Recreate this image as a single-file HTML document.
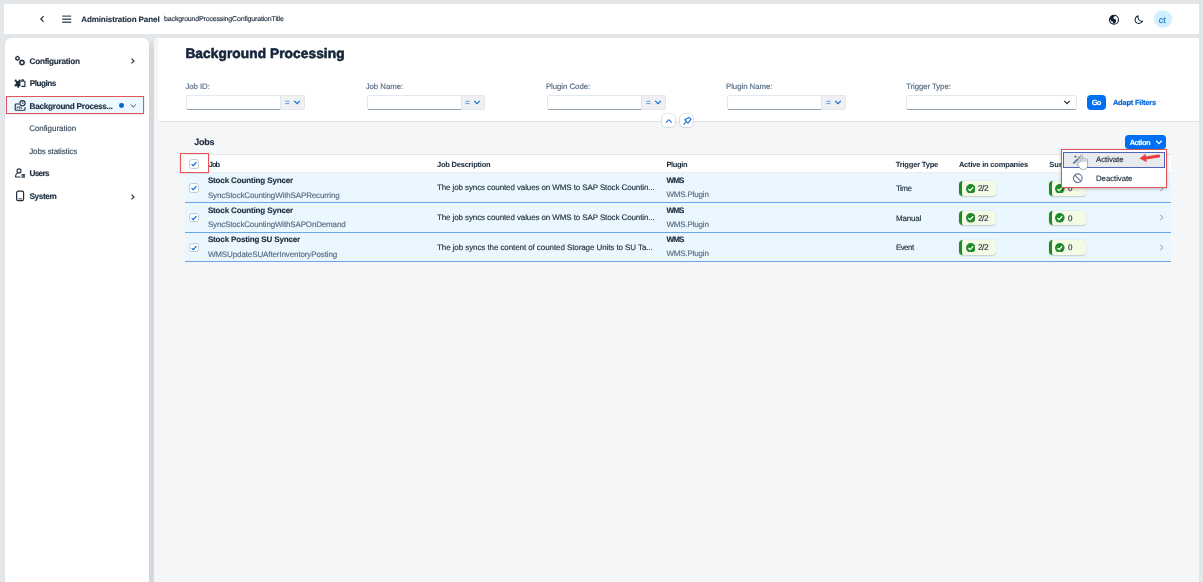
<!DOCTYPE html>
<html><head><meta charset="utf-8">
<style>
*{box-sizing:border-box;margin:0;padding:0}
html,body{width:1203px;height:582px;overflow:hidden}
body{background:#e4e7ea;font-family:"Liberation Sans",sans-serif;color:#1d2d3e;position:relative}
.a{position:absolute}
.t{position:absolute;white-space:nowrap;line-height:12px;font-size:8px;-webkit-text-stroke:0.15px currentColor;text-rendering:geometricPrecision}
.tl{position:absolute;left:0;top:0;width:1203px;height:582px;will-change:transform}
.hdr{left:4px;top:4px;width:1195px;height:30px;background:#fff}
.side{left:4.5px;top:38px;width:144px;height:560px;background:#fff;border-radius:6px;box-shadow:0 0 1px rgba(0,0,0,.12)}
.main{left:154px;top:38px;width:1045px;height:560px;background:#f5f6f7;border-radius:3px}
.fbar{left:158px;top:38px;width:1041px;height:83px;background:#fff;border-radius:0 3px 0 0;box-shadow:0 1px 0 #e1e4e7}
.inp{height:15px;background:#fff;border:1px solid #e6e9ec;border-bottom:1px solid #93a3b4;border-radius:2px 0 0 2px}
.vh{height:15px;background:#eef0f2;border:1px solid #e3e6e9;border-left:1px solid #e1e5e9;border-radius:0 2px 2px 0}
.row{left:185px;width:986px;height:29.6px;background:#ebf7fe;border-bottom:1px solid #6aa5ea}
.cb{position:absolute;width:9.6px;height:9.6px;border:1px solid #c3ccd5;border-radius:2.5px;background:#fff}
.badge{position:absolute;width:37px;height:14.6px;background:#f5fae5;border-left:3.5px solid #1f8a2a;border-radius:4px;box-shadow:0 0.5px 1.5px rgba(0,0,0,.18)}
.ok{position:absolute;width:9.6px;height:9.6px}
</style></head>
<body>
<!-- header -->
<div class="a hdr"></div>
<svg class="a" style="left:38px;top:14px" width="8" height="10" viewBox="0 0 8 10"><path d="M5.6 2.2 L2.8 5 L5.6 7.8" fill="none" stroke="#1d2d3e" stroke-width="1.15"/></svg>
<svg class="a" style="left:61px;top:14px" width="12" height="10" viewBox="0 0 12 10"><path d="M1.2 2.1h9M1.2 5.2h9M1.2 8.2h9" stroke="#4b5a6b" stroke-width="1.4"/></svg>
<div class="a" style="left:1153.5px;top:10px;width:18px;height:18px;border-radius:50%;background:#d1efff"></div>
<svg class="a" style="left:1108px;top:13.5px" width="12" height="12" viewBox="0 0 12 12">
<circle cx="6" cy="5.7" r="4.5" fill="none" stroke="#0e1e2e" stroke-width="1.1"/>
<path d="M2.4 3 C3.4 1.6 5.2 1.2 6.6 1.5 L6.3 3 L5 3.8 L6.4 5.2 L7.6 5 L8.2 7 L7.2 9 L5.6 10 L4.8 7.8 L3.2 7 L2 5 Z" fill="#0e1e2e"/>
</svg>
<svg class="a" style="left:1134px;top:14.5px" width="10" height="10" viewBox="0 0 10 10">
<path d="M4 0.8 C1.6 1.6 0.4 4.4 1.4 6.6 C2.6 9 6.6 9.2 8.6 6.2 C5.6 6.6 3.4 4.4 4 0.8 Z" fill="none" stroke="#0e1e2e" stroke-width="1.05" stroke-linejoin="round"/>
</svg>

<!-- sidebar -->
<div class="a" style="left:148px;top:38px;width:6px;height:560px;background:linear-gradient(#e4e7ea,#d4d8dd 14px);filter:blur(0.6px)"></div>
<div class="a side"></div>
<div class="a" style="left:6.4px;top:95.6px;width:137.2px;height:18.2px;background:#ebf8ff;border:1.8px solid #e8535a;box-shadow:0 0.6px 1.5px rgba(0,0,0,.22)"></div>
<svg class="a" style="left:14px;top:55px" width="12" height="12" viewBox="0 0 12 12">
<path d="M3.50 0.60 L4.60 1.39 L5.84 1.95 L5.70 3.30 L5.84 4.65 L4.60 5.21 L3.50 6.00 L2.40 5.21 L1.16 4.65 L1.30 3.30 L1.16 1.95 L2.40 1.39 Z M3.5 2.3 a1 1 0 1 0 0.01 0 Z" fill="#1d2d3e" fill-rule="evenodd"/>
<path d="M8.00 4.20 L9.03 5.01 L10.33 5.17 L10.49 6.47 L11.30 7.50 L10.49 8.53 L10.33 9.83 L9.03 9.99 L8.00 10.80 L6.97 9.99 L5.67 9.83 L5.51 8.53 L4.70 7.50 L5.51 6.47 L5.67 5.17 L6.97 5.01 Z M8 6.2 a1.3 1.3 0 1 0 0.01 0 Z" fill="#1d2d3e" fill-rule="evenodd"/>
</svg>
<svg class="a" style="left:14px;top:78px" width="12" height="11" viewBox="0 0 12 11">
<g fill="#1d2d3e"><rect x="1.8" y="3" width="4.6" height="5.2"/><circle cx="1.7" cy="2.7" r="1.1"/><circle cx="5.6" cy="2.5" r="1.1"/><circle cx="1.4" cy="7.3" r="1.1"/><circle cx="4.2" cy="8.8" r="1.1"/></g>
<path d="M6.4 3.3 H8 V2.1 Q8.6 1.2 9.3 2.1 V3.3 H10.9 V8.4 H7.4" fill="none" stroke="#1d2d3e" stroke-width="1.1" stroke-linejoin="round"/>
</svg>
<svg class="a" style="left:14px;top:99px" width="12" height="12" viewBox="0 0 12 12">
<path d="M5 5 H2 Q1.2 5 1.2 5.8 V10.4 Q1.2 11.2 2 11.2 H10.2 Q11 11.2 11 10.4 V8.2" fill="none" stroke="#1d2d3e" stroke-width="1.1"/>
<circle cx="8.5" cy="4.2" r="2.6" fill="none" stroke="#1d2d3e" stroke-width="1.1"/>
<path d="M8.5 2.9 V4.4 H9.5" fill="none" stroke="#1d2d3e" stroke-width="0.8"/>
<path d="M2.8 7.6 L4 9.4 M4 7.6 L2.8 9.4 M4.8 8.5 a0.7 0.9 0 1 0 1.4 0 a0.7 0.9 0 1 0 -1.4 0 M7 7.6 V9.4 L8 9.2" fill="none" stroke="#1d2d3e" stroke-width="0.7"/>
</svg>
<svg class="a" style="left:14px;top:168px" width="12" height="11" viewBox="0 0 12 11">
<circle cx="5" cy="2.9" r="2" fill="none" stroke="#1d2d3e" stroke-width="1.1"/>
<path d="M3.6 4.6 Q1.4 6.4 1.4 8.4 Q1.4 9 2 9 H6" fill="none" stroke="#1d2d3e" stroke-width="1.1" stroke-linecap="round"/>
<rect x="7.6" y="6" width="3.4" height="3.8" fill="#3a4a5a"/>
<path d="M7.6 7.2h3.4M7.6 8.5h3.4" stroke="#9aa6b2" stroke-width="0.4"/>
</svg>
<svg class="a" style="left:15px;top:190px" width="10" height="12" viewBox="0 0 10 12">
<rect x="1.6" y="1.2" width="7" height="9.5" rx="1.6" fill="none" stroke="#1d2d3e" stroke-width="1.2"/>
<path d="M3.8 8.8 H6.6" stroke="#1d2d3e" stroke-width="0.9" stroke-linecap="round"/>
</svg>
<svg class="a" style="left:130px;top:58px" width="6" height="6" viewBox="0 0 6 6"><path d="M1.5 0.7 L4 3 L1.5 5.3" fill="none" stroke="#1d2d3e" stroke-width="1.15"/></svg>
<svg class="a" style="left:130px;top:193.5px" width="6" height="6" viewBox="0 0 6 6"><path d="M1.5 0.7 L4 3 L1.5 5.3" fill="none" stroke="#1d2d3e" stroke-width="1.15"/></svg>
<svg class="a" style="left:130px;top:103px" width="7" height="6" viewBox="0 0 7 6"><path d="M0.8 1.6 L3.3 4 L5.8 1.6" fill="none" stroke="#1d2d3e" stroke-width="0.9"/></svg>
<div class="a" style="left:119.2px;top:103.4px;width:4.8px;height:4.8px;border-radius:50%;background:#0064d9"></div>

<!-- main -->
<div class="a main"></div>
<div class="a fbar"></div>

<div class="a inp" style="left:186px;top:95px;width:95px"></div><div class="a vh" style="left:280px;top:95px;width:25px"></div>
<div class="a inp" style="left:367px;top:95px;width:95px"></div><div class="a vh" style="left:461px;top:95px;width:24px"></div>
<div class="a inp" style="left:547px;top:95px;width:95px"></div><div class="a vh" style="left:641px;top:95px;width:25px"></div>
<div class="a inp" style="left:727px;top:95px;width:95px"></div><div class="a vh" style="left:821px;top:95px;width:25px"></div>
<div class="a inp" style="left:906px;top:95px;width:171px;border-radius:2px"></div>
<svg class="a" style="left:1063px;top:99px" width="8" height="7" viewBox="0 0 8 7"><path d="M1.2 1.8 L4 4.6 L6.8 1.8" fill="none" stroke="#1d2d3e" stroke-width="1.2"/></svg>

<svg class="a" style="left:284px;top:99px" width="18" height="7" viewBox="0 0 18 7"><path d="M1.4 2.3h4M1.4 4.6h4" stroke="#3f86e3" stroke-width="0.8"/><path d="M10.2 1.9 L13 4.6 L15.8 1.9" fill="none" stroke="#0a69da" stroke-width="1.15"/></svg>
<svg class="a" style="left:464.3px;top:99px" width="18" height="7" viewBox="0 0 18 7"><path d="M1.4 2.3h4M1.4 4.6h4" stroke="#3f86e3" stroke-width="0.8"/><path d="M10.2 1.9 L13 4.6 L15.8 1.9" fill="none" stroke="#0a69da" stroke-width="1.15"/></svg>
<svg class="a" style="left:644.6px;top:99px" width="18" height="7" viewBox="0 0 18 7"><path d="M1.4 2.3h4M1.4 4.6h4" stroke="#3f86e3" stroke-width="0.8"/><path d="M10.2 1.9 L13 4.6 L15.8 1.9" fill="none" stroke="#0a69da" stroke-width="1.15"/></svg>
<svg class="a" style="left:824.9px;top:99px" width="18" height="7" viewBox="0 0 18 7"><path d="M1.4 2.3h4M1.4 4.6h4" stroke="#3f86e3" stroke-width="0.8"/><path d="M10.2 1.9 L13 4.6 L15.8 1.9" fill="none" stroke="#0a69da" stroke-width="1.15"/></svg>

<div class="a" style="left:1087.3px;top:95.2px;width:18.8px;height:14.6px;background:#0070f2;border-radius:4px"></div>

<!-- collapse / pin -->
<div class="a" style="left:662.2px;top:114.3px;width:13.3px;height:13.1px;background:#fff;border-radius:4px;box-shadow:0 0 0 0.6px #cdd3d9,0 0.5px 1.5px rgba(0,0,0,.15)"></div>
<div class="a" style="left:679.8px;top:114.3px;width:13.3px;height:13.1px;background:#fff;border-radius:4px;box-shadow:0 0 0 0.6px #cdd3d9,0 0.5px 1.5px rgba(0,0,0,.15)"></div>
<svg class="a" style="left:664px;top:116px" width="10" height="10" viewBox="0 0 10 10"><path d="M1.9 6.6 L4.8 3.7 L7.7 6.6" fill="none" stroke="#1a6fdc" stroke-width="1.15"/></svg>
<svg class="a" style="left:681.5px;top:116px" width="10" height="10" viewBox="0 0 10 10"><path d="M2.8 3.7 L6.95 1.4 L9.15 3.2 L6 7.2 Z M4.1 5.7 L1.9 8.3" fill="none" stroke="#1a6fdc" stroke-width="1.1" stroke-linejoin="round" stroke-linecap="round"/></svg>

<!-- table -->
<div class="a" style="left:185px;top:154.2px;width:986px;height:19.3px;background:#fff;border-top:1px solid #e4e6e8;border-bottom:1px solid #eceef0"></div>
<div class="a row" style="top:173.4px"></div>
<div class="a row" style="top:203px"></div>
<div class="a row" style="top:232.6px"></div>

<div class="cb" style="left:189.3px;top:159.3px"></div>
<div class="cb" style="left:189.3px;top:183.3px"></div>
<div class="cb" style="left:189.3px;top:212.9px"></div>
<div class="cb" style="left:189.3px;top:242.5px"></div>
<svg class="a" style="left:189.3px;top:159.3px" width="10" height="10" viewBox="0 0 10 10"><path d="M2.6 5.1 L4.3 6.7 L7.4 3.1" fill="none" stroke="#0064d9" stroke-width="1.1"/></svg>
<svg class="a" style="left:189.3px;top:183.3px" width="10" height="10" viewBox="0 0 10 10"><path d="M2.6 5.1 L4.3 6.7 L7.4 3.1" fill="none" stroke="#0064d9" stroke-width="1.1"/></svg>
<svg class="a" style="left:189.3px;top:212.9px" width="10" height="10" viewBox="0 0 10 10"><path d="M2.6 5.1 L4.3 6.7 L7.4 3.1" fill="none" stroke="#0064d9" stroke-width="1.1"/></svg>
<svg class="a" style="left:189.3px;top:242.5px" width="10" height="10" viewBox="0 0 10 10"><path d="M2.6 5.1 L4.3 6.7 L7.4 3.1" fill="none" stroke="#0064d9" stroke-width="1.1"/></svg>

<div class="badge" style="left:959px;top:181px"></div>
<div class="badge" style="left:959px;top:210.5px"></div>
<div class="badge" style="left:959px;top:240px"></div>
<div class="badge" style="left:1048.8px;top:181px"></div>
<div class="badge" style="left:1048.8px;top:210.5px"></div>
<div class="badge" style="left:1048.8px;top:240px"></div>
<svg class="ok" style="left:965.5px;top:183.6px" viewBox="0 0 10 10"><circle cx="5" cy="5" r="5" fill="#1f8a2a"/><path d="M2.5 5.2 L4.3 6.9 L7.5 3.4" fill="none" stroke="#fff" stroke-width="1.35"/></svg>
<svg class="ok" style="left:965.5px;top:213.1px" viewBox="0 0 10 10"><circle cx="5" cy="5" r="5" fill="#1f8a2a"/><path d="M2.5 5.2 L4.3 6.9 L7.5 3.4" fill="none" stroke="#fff" stroke-width="1.35"/></svg>
<svg class="ok" style="left:965.5px;top:242.6px" viewBox="0 0 10 10"><circle cx="5" cy="5" r="5" fill="#1f8a2a"/><path d="M2.5 5.2 L4.3 6.9 L7.5 3.4" fill="none" stroke="#fff" stroke-width="1.35"/></svg>
<svg class="ok" style="left:1055.3px;top:183.6px" viewBox="0 0 10 10"><circle cx="5" cy="5" r="5" fill="#1f8a2a"/><path d="M2.5 5.2 L4.3 6.9 L7.5 3.4" fill="none" stroke="#fff" stroke-width="1.35"/></svg>
<svg class="ok" style="left:1055.3px;top:213.1px" viewBox="0 0 10 10"><circle cx="5" cy="5" r="5" fill="#1f8a2a"/><path d="M2.5 5.2 L4.3 6.9 L7.5 3.4" fill="none" stroke="#fff" stroke-width="1.35"/></svg>
<svg class="ok" style="left:1055.3px;top:242.6px" viewBox="0 0 10 10"><circle cx="5" cy="5" r="5" fill="#1f8a2a"/><path d="M2.5 5.2 L4.3 6.9 L7.5 3.4" fill="none" stroke="#fff" stroke-width="1.35"/></svg>

<svg class="a" style="left:1159px;top:184.5px" width="6" height="7" viewBox="0 0 6 7"><path d="M1.2 1 L4 3.5 L1.2 6" fill="none" stroke="#7b8fa4" stroke-width="0.9"/></svg>
<svg class="a" style="left:1159px;top:214px" width="6" height="7" viewBox="0 0 6 7"><path d="M1.2 1 L4 3.5 L1.2 6" fill="none" stroke="#7b8fa4" stroke-width="0.9"/></svg>
<svg class="a" style="left:1159px;top:243.5px" width="6" height="7" viewBox="0 0 6 7"><path d="M1.2 1 L4 3.5 L1.2 6" fill="none" stroke="#7b8fa4" stroke-width="0.9"/></svg>

<div class="a" style="left:1124.6px;top:135px;width:41.9px;height:14.1px;background:#0070f2;border-radius:3.5px"></div>
<svg class="a" style="left:1155px;top:138.5px" width="8" height="7" viewBox="0 0 8 7"><path d="M1.2 1.8 L4 4.6 L6.8 1.8" fill="none" stroke="#fff" stroke-width="1.3"/></svg>

<!-- red box around header checkbox -->
<div class="a" style="left:179.8px;top:153.3px;width:29.3px;height:19.6px;border:1.8px solid #e8535a;box-shadow:0 0.6px 1.5px rgba(0,0,0,.22)"></div>

<div class="tl">
<div class="t" style="left:81.20px;top:14.20px;font-size:8.0px;letter-spacing:-0.084px;font-weight:bold;color:#1d2d3e;">Administration Panel</div>
<div class="t" style="left:164.10px;top:14.30px;font-size:7.0px;letter-spacing:-0.163px;color:#1d2d3e;">backgroundProcessingConfigurationTitle</div>
<div class="t" style="left:1158.80px;top:13.60px;font-size:8.7px;color:#0a6ed1;letter-spacing:0.2px;">ct</div>
<div class="t" style="left:29.50px;top:55.70px;font-size:8.2px;letter-spacing:-0.263px;font-weight:bold;color:#1d2d3e;">Configuration</div>
<div class="t" style="left:29.70px;top:78.00px;font-size:8.2px;letter-spacing:-0.486px;font-weight:bold;color:#1d2d3e;">Plugins</div>
<div class="t" style="left:29.50px;top:100.50px;font-size:8.2px;letter-spacing:-0.268px;font-weight:bold;color:#1d2d3e;">Background Process...</div>
<div class="t" style="left:29.20px;top:122.90px;font-size:8.0px;letter-spacing:-0.053px;color:#3a4a5b;">Configuration</div>
<div class="t" style="left:29.20px;top:145.80px;font-size:8.0px;letter-spacing:-0.128px;color:#3a4a5b;">Jobs statistics</div>
<div class="t" style="left:29.50px;top:168.00px;font-size:8.2px;letter-spacing:-0.701px;font-weight:bold;color:#1d2d3e;">Users</div>
<div class="t" style="left:29.50px;top:191.00px;font-size:8.2px;letter-spacing:-0.390px;font-weight:bold;color:#1d2d3e;">System</div>
<div class="t" style="left:185.40px;top:47.70px;font-size:13.7px;letter-spacing:0.086px;font-weight:bold;color:#142439;-webkit-text-stroke:0.6px currentColor;">Background Processing</div>
<div class="t" style="left:185.40px;top:81.10px;font-size:7.8px;letter-spacing:-0.039px;color:#556b82;">Job ID:</div>
<div class="t" style="left:365.70px;top:81.00px;font-size:7.8px;letter-spacing:-0.029px;color:#556b82;">Job Name:</div>
<div class="t" style="left:545.90px;top:81.00px;font-size:7.8px;letter-spacing:-0.034px;color:#556b82;">Plugin Code:</div>
<div class="t" style="left:726.00px;top:81.00px;font-size:7.8px;letter-spacing:-0.040px;color:#556b82;">Plugin Name:</div>
<div class="t" style="left:906.20px;top:81.00px;font-size:7.8px;letter-spacing:-0.073px;color:#556b82;">Trigger Type:</div>
<div class="t" style="left:1091.80px;top:96.80px;font-size:7.6px;letter-spacing:-0.907px;font-weight:bold;color:#ffffff;">Go</div>
<div class="t" style="left:1112.90px;top:96.80px;font-size:7.6px;letter-spacing:-0.266px;font-weight:bold;color:#0064d9;">Adapt Filters</div>
<div class="t" style="left:194.30px;top:136.40px;font-size:9.0px;letter-spacing:-0.267px;font-weight:bold;color:#1d2d3e;">Jobs</div>
<div class="t" style="left:208.70px;top:158.70px;font-size:7.5px;letter-spacing:-0.976px;font-weight:bold;color:#1d2d3e;-webkit-text-stroke:0.05px currentColor;">Job</div>
<div class="t" style="left:437.00px;top:159.00px;font-size:7.5px;letter-spacing:-0.221px;font-weight:bold;color:#1d2d3e;-webkit-text-stroke:0.05px currentColor;">Job Description</div>
<div class="t" style="left:666.40px;top:158.60px;font-size:7.5px;letter-spacing:-0.347px;font-weight:bold;color:#1d2d3e;-webkit-text-stroke:0.05px currentColor;">Plugin</div>
<div class="t" style="left:895.70px;top:158.60px;font-size:7.5px;letter-spacing:-0.171px;font-weight:bold;color:#1d2d3e;-webkit-text-stroke:0.05px currentColor;">Trigger Type</div>
<div class="t" style="left:958.90px;top:158.60px;font-size:7.5px;letter-spacing:-0.186px;font-weight:bold;color:#1d2d3e;-webkit-text-stroke:0.05px currentColor;">Active in companies</div>
<div class="t" style="left:1049.20px;top:158.60px;font-size:7.5px;font-weight:bold;color:#1d2d3e;-webkit-text-stroke:0.05px currentColor;">Suspended</div>
<div class="t" style="left:207.90px;top:175.30px;font-size:8.0px;letter-spacing:-0.135px;font-weight:bold;color:#1d2d3e;">Stock Counting Syncer</div>
<div class="t" style="left:207.90px;top:189.50px;font-size:8.0px;letter-spacing:-0.149px;color:#556b82;">SyncStockCountingWithSAPRecurring</div>
<div class="t" style="left:207.90px;top:204.80px;font-size:8.0px;letter-spacing:-0.135px;font-weight:bold;color:#1d2d3e;">Stock Counting Syncer</div>
<div class="t" style="left:207.90px;top:219.00px;font-size:8.0px;letter-spacing:-0.161px;color:#556b82;">SyncStockCountingWithSAPOnDemand</div>
<div class="t" style="left:207.90px;top:234.30px;font-size:8.0px;letter-spacing:-0.149px;font-weight:bold;color:#1d2d3e;">Stock Posting SU Syncer</div>
<div class="t" style="left:207.90px;top:248.50px;font-size:8.0px;letter-spacing:-0.116px;color:#556b82;">WMSUpdateSUAfterInventoryPosting</div>
<div class="t" style="left:437.00px;top:182.30px;font-size:8.0px;letter-spacing:-0.107px;color:#1d2d3e;">The job syncs counted values on WMS to SAP Stock Countin...</div>
<div class="t" style="left:437.00px;top:211.90px;font-size:8.0px;letter-spacing:-0.107px;color:#1d2d3e;">The job syncs counted values on WMS to SAP Stock Countin...</div>
<div class="t" style="left:437.00px;top:241.60px;font-size:8.0px;letter-spacing:-0.083px;color:#1d2d3e;">The job syncs the content of counted Storage Units to SU Ta...</div>
<div class="t" style="left:666.40px;top:175.20px;font-size:8.0px;letter-spacing:-0.807px;font-weight:bold;color:#1d2d3e;">WMS</div>
<div class="t" style="left:666.40px;top:189.20px;font-size:8.0px;letter-spacing:-0.174px;color:#556b82;">WMS.Plugin</div>
<div class="t" style="left:666.40px;top:204.70px;font-size:8.0px;letter-spacing:-0.807px;font-weight:bold;color:#1d2d3e;">WMS</div>
<div class="t" style="left:666.40px;top:218.80px;font-size:8.0px;letter-spacing:-0.174px;color:#556b82;">WMS.Plugin</div>
<div class="t" style="left:666.40px;top:234.20px;font-size:8.0px;letter-spacing:-0.807px;font-weight:bold;color:#1d2d3e;">WMS</div>
<div class="t" style="left:666.40px;top:248.30px;font-size:8.0px;letter-spacing:-0.174px;color:#556b82;">WMS.Plugin</div>
<div class="t" style="left:895.90px;top:182.60px;font-size:8.0px;letter-spacing:-0.510px;color:#1d2d3e;">Time</div>
<div class="t" style="left:895.90px;top:212.50px;font-size:8.0px;letter-spacing:-0.172px;color:#1d2d3e;">Manual</div>
<div class="t" style="left:895.90px;top:242.00px;font-size:8.0px;letter-spacing:-0.559px;color:#1d2d3e;">Event</div>
<div class="t" style="left:977.90px;top:181.60px;font-size:8.4px;letter-spacing:-0.492px;color:#1d2d3e;">2/2</div>
<div class="t" style="left:977.90px;top:211.50px;font-size:8.4px;letter-spacing:-0.492px;color:#1d2d3e;">2/2</div>
<div class="t" style="left:977.90px;top:241.00px;font-size:8.4px;letter-spacing:-0.492px;color:#1d2d3e;">2/2</div>
<div class="t" style="left:1068.00px;top:182.60px;font-size:8.0px;color:#1d2d3e;">0</div>
<div class="t" style="left:1068.00px;top:212.50px;font-size:8.0px;color:#1d2d3e;">0</div>
<div class="t" style="left:1068.00px;top:242.00px;font-size:8.0px;color:#1d2d3e;">0</div>
<div class="t" style="left:1129.70px;top:137.00px;font-size:7.4px;letter-spacing:-0.435px;font-weight:bold;color:#ffffff;">Action</div>
</div>

<!-- menu -->
<div class="a" style="left:1060.5px;top:149px;width:106.5px;height:38.8px;background:#fff;border:1.8px solid #e4555b;box-shadow:0 1px 3px rgba(0,0,0,.25)"></div>
<div class="a" style="left:1063px;top:151.5px;width:102px;height:16px;background:#e8eaed;border:1.3px solid #4a67c0"></div>
<svg class="a" style="left:1072px;top:173px" width="12" height="11" viewBox="0 0 12 11"><circle cx="5.8" cy="5.2" r="4.3" fill="none" stroke="#5f7590" stroke-width="1.1"/><path d="M2.8 2.2 L8.8 8.2" stroke="#5f7590" stroke-width="1.1"/></svg>
<svg class="a" style="left:1068px;top:150px" width="24" height="22" viewBox="0 0 24 22">
<path d="M5.9 12.9 L9.9 9.2" stroke="#5b7fa6" stroke-width="1.9" stroke-linecap="round"/>
<path d="M7.4 5 l0.55 1.1 1.1 0.55 -1.1 0.55 -0.55 1.1 -0.55 -1.1 -1.1 -0.55 1.1 -0.55z" fill="#5b7fa6"/>
<path d="M11.2 6.1 l0.45 0.9 0.9 0.45 -0.9 0.45 -0.45 0.9 -0.45 -0.9 -0.9 -0.45 0.9 -0.45z" fill="#5b7fa6"/>
<path d="M12.3 12 V6.2 Q12.3 5 13.45 5 Q14.6 5 14.6 6.2 V9.2 Q15.6 8.4 16.6 9 Q17.6 8.4 18.6 9.2 Q19.6 9 19.6 10.2 V14.6 Q19.6 19.4 15.6 19.4 H14.6 Q12.6 19.4 11.6 17.6 L9.2 14 Q8.8 12.6 10.2 12.8 Z" fill="#fff" stroke="#8b9096" stroke-width="0.75" stroke-linejoin="round"/>
<path d="M12.7 6.5 Q13.4 5.4 14.2 6.5 V9.6 Q15.6 8.9 16.6 9.5 Q17.6 8.9 19.2 10 V12 H12.7 Z" fill="#c9cccf" opacity="0.8"/>
</svg>
<svg class="a" style="left:1136px;top:150px" width="26" height="14" viewBox="0 0 26 14">
<path d="M3.5 8.4 L9.7 3.7 L9.8 6.4 L22.6 4.4 Q24.2 4.4 24.2 5.9 Q24.2 7.4 22.8 7.6 L10.2 9.6 L10.8 12.2 Z" fill="#ee3b41"/>
</svg>
<div class="tl">
<div class="t" style="left:1096.00px;top:153.80px;font-size:7.8px;letter-spacing:-0.028px;color:#1d2d3e;">Activate</div>
<div class="t" style="left:1096.00px;top:172.50px;font-size:7.8px;letter-spacing:-0.045px;color:#1d2d3e;">Deactivate</div>
</div>
</body></html>
